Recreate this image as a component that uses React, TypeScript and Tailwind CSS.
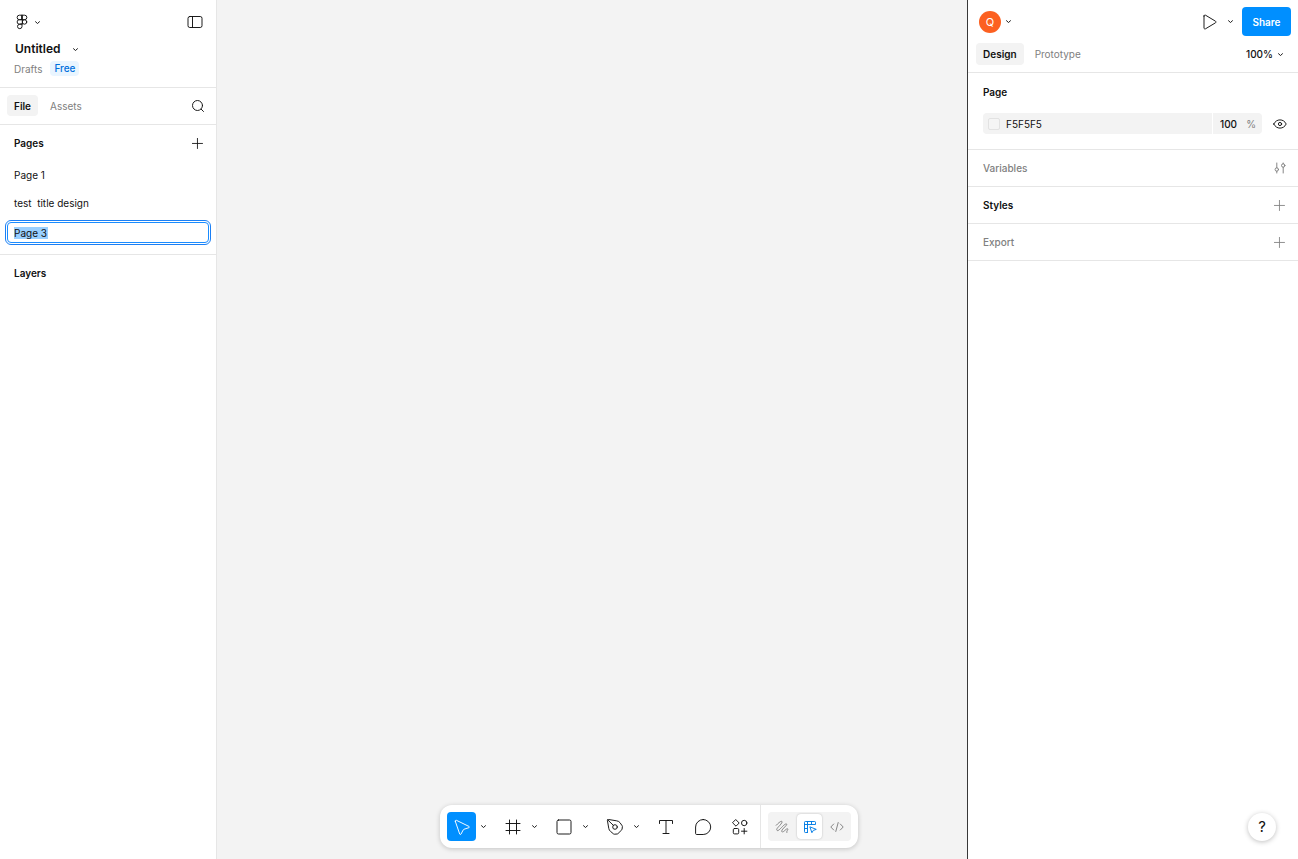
import type { ReactNode } from "react";

const Svg = ({ size = 22, box = 24, className = "", children }: { size?: number; box?: number; className?: string; children: ReactNode }) => (
  <svg
    width={size}
    height={size}
    viewBox={`0 0 ${box} ${box}`}
    fill="none"
    stroke="currentColor"
    strokeWidth={0.95}
    strokeLinecap="round"
    strokeLinejoin="round"
    className={`shrink-0 ${className}`}
    aria-hidden="true"
  >
    {children}
  </svg>
);

const Chevron = ({ label }: { label: string }) => (
  <button aria-label={label} className="flex h-7 w-[14px] items-center justify-center">
    <Svg size={7} box={7}>
      <path d="M1.5 2.7 3.5 4.5 5.5 2.7" />
    </Svg>
  </button>
);

const PlusIcon = () => (
  <Svg>
    <path d="M12.5 7v11M7 12.5h11" />
  </Svg>
);

const FigmaIcon = () => (
  <Svg size={16} box={16}>
    <path d="M8 1.2H5.4a2.25 2.25 0 0 0 0 4.5H8zM8 1.2h2.6a2.25 2.25 0 0 1 0 4.5H8zM8 5.7H5.4a2.25 2.25 0 0 0 0 4.5H8zM5.4 10.2a2.25 2.25 0 1 0 2.6 2.3v-2.3z" />
    <circle cx="10.5" cy="7.95" r="2.25" />
  </Svg>
);

const SidebarIcon = () => (
  <Svg size={16} box={16}>
    <rect x="1" y="2.5" width="14" height="11" rx="1.8" />
    <path d="M5.5 2.5v11" />
  </Svg>
);

const SearchIcon = () => (
  <Svg size={14} box={14}>
    <circle cx="6.5" cy="6.5" r="5" />
    <path d="m10.2 10.2 2.3 2.3" />
  </Svg>
);

const EyeIcon = () => (
  <Svg size={14} box={14}>
    <path d="M.8 7C2.2 4.2 4.4 2.9 7 2.9S11.8 4.2 13.2 7C11.8 9.8 9.600 11.100 7 11.100S2.200 9.800.8 7Z" />
    <circle cx="7" cy="7" r="1.6" />
  </Svg>
);

const VariablesIcon = () => (
  <Svg size={12} box={12}>
    <path d="M2.8 1v4.800M2.800 9.200v1.800M9.200 1v.8M9.200 5.200v5.800" />
    <circle cx="2.8" cy="7.5" r="1.7" />
    <circle cx="9.2" cy="3.5" r="1.7" />
  </Svg>
);

const PlayIcon = () => (
  <Svg size={16} box={16}>
    <path d="M2 2v12c0 .8.800 1.200 1.500.8l10-6c.6-.4.6-1.200 0-1.600l-10-6C2.800.8 2 1.200 2 2Z" />
  </Svg>
);

const MoveIcon = () => (
  <Svg size={18} box={18}>
    <path d="M2.3 3.300 6.700 16c.2.6 1 .6 1.300.1l2.300-4.300c.1-.2.3-.4.600-.5l4.900-1.600c.6-.2.7-1 .1-1.300L3.400 2.300c-.7-.3-1.300.3-1.100 1Z" />
  </Svg>
);

const FrameIcon = () => (
  <Svg size={16} box={16}>
    <path d="M4.5 1v14M11.5 1v14M1 4.5h14M1 11.5h14" />
  </Svg>
);

const RectIcon = () => (
  <Svg size={16} box={16}>
    <rect x="1" y="1" width="14" height="14" rx="1.5" />
  </Svg>
);

const PenIcon = () => (
  <Svg size={18} box={18}>
    <path d="M2.2 1.5C1.700 1.500 1.300 1.900 1.400 2.400L2.800 10.500c.2 1.200.8 2.200 1.700 2.900l3 2.500c.2.200.5.300.8.300l2.900-.2c.300 0 .5-.1.700-.3l3.900-3.900c.2-.2.300-.4.300-.7l.3-2.600c0-.3 0-.5-.2-.7l-2.200-3.100c-.7-1-1.700-1.600-2.900-1.800Z" />
    <path d="m1.700 1.800 5.700 5.600" />
    <circle cx="9" cy="9" r="2.300" />
  </Svg>
);

const TextIcon = () => (
  <Svg size={16} box={16}>
    <path d="M1.500 4.500v-3h13v3M8 1.500v13M5 14.500h6" />
  </Svg>
);

const CommentIcon = () => (
  <Svg size={18} box={18}>
    <path d="M9.200 1.500a7.500 7.500 0 1 1 0 15H2.600c-.6 0-1-.4-1-1V9a7.600 7.500 0 0 1 7.600-7.500Z" />
  </Svg>
);

const ActionsIcon = () => (
  <Svg size={16} box={16}>
    <path d="M4 .8 7.200 4 4 7.200.8 4Z" />
    <circle cx="12.2" cy="4" r="2.700" />
    <rect x="1.3" y="9.500" width="5.400" height="5.400" rx="1.200" />
    <path d="M12.200 9.500v5.400M9.500 12.200h5.400" />
  </Svg>
);

const DrawIcon = () => (
  <Svg size={14} box={14}>
    <path d="M1.200 5.300C3.200 3.200 5.300 1.300 6.400 1.300c1.600 0 .3 2-1.600 4.100-1.900 2-3.900 4-2.800 5 1.300 1.100 4.100-2.600 6.400-4.800 2-1.900 3.700-2.300 3.200-.9-.5 1.500-5.500 5-4.800 6.800.7 1.500 2.500-.7 4-1.900 1.400-1.200 2.500-1.100 1.900.2-.4.900-1.300 1.700-.9 2.700" />
  </Svg>
);

const DesignIcon = () => (
  <Svg size={14} box={14}>
    <path d="M4.500 12.500H2.300a.8.8 0 0 1-.8-.8V2.300c0-.5.3-.8.8-.8h9.400c.5 0 .8.300.8.8v2.200h-11M4.500 1.500v11M8.500 1.500v3M1.500 8.500h3" />
    <path d="M7 7.200 8.900 12.700l1.400-2.300 2.600-.9Z" />
  </Svg>
);

const CodeIcon = () => (
  <Svg size={14} box={14}>
    <path d="M3.700 4 .8 7l2.900 3M10.300 4l2.900 3-2.900 3M8.200 2.500 5.800 11.500" />
  </Svg>
);

const tools = [
  { label: "Frame", icon: <FrameIcon />, menu: true },
  { label: "Rectangle", icon: <RectIcon />, menu: true },
  { label: "Pen", icon: <PenIcon />, menu: true },
  { label: "Text", icon: <TextIcon />, menu: false },
  { label: "Comment", icon: <CommentIcon />, menu: false },
  { label: "Actions", icon: <ActionsIcon />, menu: false },
];

const LeftPanel = () => (
  <aside className="flex w-[217px] shrink-0 flex-col border-r border-[#e6e6e6] bg-white">
    <header className="border-b border-[#e6e6e6] pt-2 pb-[11px]">
      <div className="flex h-7 items-center justify-between pr-[13px] pl-[14px]">
        <div className="flex items-center">
          <button aria-label="Main menu">
            <FigmaIcon />
          </button>
          <Chevron label="Open main menu" />
        </div>
        <button aria-label="Toggle sidebar">
          <SidebarIcon />
        </button>
      </div>
      <div className="flex h-[25px] items-center gap-2 pt-px pl-[15px]">
        <h1 className="text-[12px] leading-4 font-semibold">Untitled</h1>
        <Chevron label="File options" />
      </div>
      <div className="flex h-[15px] items-center gap-2 pl-[14px]">
        <a href="#drafts" className="text-[#808080]">Drafts</a>
        <span className="rounded-[4px] bg-[#e9f5ff] px-[4px] leading-[15px] font-medium text-[#0070dd]">Free</span>
      </div>
    </header>

    {/* File / Assets tabs */}
    <nav className="flex h-[37px] items-center border-b border-[#e6e6e6] pr-[11px] pb-px pl-[7px]">
      <button className="h-[21px] rounded-[4px] bg-[#f3f3f3] px-[7px] font-semibold">File</button>
      <button className="ml-[5px] h-[21px] px-[7px] text-[#808080]">Assets</button>
      <button aria-label="Search" className="ml-auto">
        <SearchIcon />
      </button>
    </nav>

    <section className="border-b border-[#e6e6e6] pb-[9px]">
      <div className="flex h-9 items-center justify-between pr-2 pb-px pl-[14px]">
        <h2 className="font-semibold">Pages</h2>
        <button aria-label="Add page">
          <PlusIcon />
        </button>
      </div>
      <button className="flex h-7 w-full items-center pl-[14px]">Page 1</button>
      <button className="flex h-7 w-full items-center pl-[14px] whitespace-pre">test  title design</button>
      <div className="px-[5px] pt-[3px]">
        <label className="block rounded-[6px] border border-[#1a7ff5] p-px">
          <span className="flex h-[21px] items-center rounded-[4px] border border-[#1a8cff] px-[6px]">
            <input
              aria-label="Page name"
              defaultValue="Page 3"
              className="h-3 w-[34px] bg-[#99cfff] outline-none"
            />
          </span>
        </label>
      </div>
    </section>

    <h2 className="flex h-9 items-center pl-[14px] font-semibold">Layers</h2>
  </aside>
);

const RightPanel = () => (
  <aside className="w-[331px] shrink-0 border-l border-[#383838] bg-white">
    <header className="border-b border-[#e6e6e6] pt-[7px]">
      <div className="flex h-[29px] items-center pr-[7px] pl-[11px]">
        <button aria-label="Account" className="flex size-[22px] items-center justify-center rounded-full bg-[#fc6020] text-[11px] text-white">
          Q
        </button>
        <Chevron label="Account menu" />
        <button aria-label="Present" className="mr-[5px] ml-auto">
          <PlayIcon />
        </button>
        <Chevron label="Present options" />
        <button className="ml-[5px] h-[29px] w-[49px] rounded-[4px] bg-[#008fff] font-semibold text-white">Share</button>
      </div>
      <div className="flex h-9 items-center pr-[11px] pl-2">
        <button className="h-[22px] rounded-[4px] bg-[#f3f3f3] px-[7px] font-semibold">Design</button>
        <button className="ml-1 h-[22px] px-[7px] text-[#808080]">Prototype</button>
        <span className="ml-auto font-medium">100%</span>
        <Chevron label="Zoom options" />
      </div>
    </header>

    <section className="border-b border-[#e6e6e6] pb-[15px] pl-[15px]">
      <h2 className="flex h-[37px] items-center font-semibold">Page</h2>
      <div className="mt-[3px] flex items-center">
        <div className="flex h-[21px] flex-1 items-center rounded-l-[4px] bg-[#f3f3f3] pl-[5px]">
          <button aria-label="Page color" className="size-3 rounded-[2px] border border-[#e2e2e2] bg-[#f5f5f5]" />
          <input aria-label="Page color hex" defaultValue="F5F5F5" className="ml-[6px] w-24 outline-none" />
        </div>
        <label className="ml-px flex h-[21px] w-[49px] items-center justify-between rounded-r-[4px] bg-[#f3f3f3] pr-[6px] pl-[7px]">
          <input aria-label="Page opacity" defaultValue="100" className="w-5 font-medium outline-none" />
          <span className="text-[#808080]">%</span>
        </label>
        <button aria-label="Toggle visibility" className="mr-[11px] ml-[11px]">
          <EyeIcon />
        </button>
      </div>
    </section>

    <section className="flex h-[37px] items-center justify-between border-b border-[#e6e6e6] pr-[12px] pb-px pl-[15px] text-[#808080]">
      <h2 className="font-medium">Variables</h2>
      <button aria-label="Open variables">
        <VariablesIcon />
      </button>
    </section>
    <section className="flex h-[37px] items-center justify-between border-b border-[#e6e6e6] pr-2 pb-px pl-[15px]">
      <h2 className="font-semibold">Styles</h2>
      <button aria-label="Add style" className="text-[#808080]">
        <PlusIcon />
      </button>
    </section>
    <section className="flex h-[37px] items-center justify-between border-b border-[#e6e6e6] pr-2 pb-px pl-[15px] text-[#808080]">
      <h2 className="font-medium">Export</h2>
      <button aria-label="Add export">
        <PlusIcon />
      </button>
    </section>
  </aside>
);

const Toolbar = () => (
  <div className="flex h-[43px] items-center rounded-[12px] bg-white pl-[7px] shadow-[0_1px_5px_rgba(0,0,0,0.2)]">
    <button aria-label="Move" className="flex size-[29px] items-center justify-center rounded-[4px] bg-[#008fff] text-white">
      <MoveIcon />
    </button>
    <Chevron label="Move options" />
    {tools.map((tool) => (
      <div key={tool.label} className="ml-[8px] flex items-center">
        <button aria-label={tool.label} className="flex size-[29px] items-center justify-center">
          {tool.icon}
        </button>
        {tool.menu && <Chevron label={`${tool.label} options`} />}
      </div>
    ))}
    <div className="ml-[6px] flex h-full items-center border-l border-[#e6e6e6] px-[7px]">
      <div className="flex h-[29px] items-center rounded-[4px] bg-[#f3f3f3] text-[#808080]">
        <button aria-label="Draw" className="flex h-[29px] w-7 items-center justify-center">
          <DrawIcon />
        </button>
        <button aria-label="Design mode" className="mx-px flex h-[25px] w-[25px] items-center justify-center rounded-[4px] bg-white text-[#007be5] shadow-[0_0_2px_rgba(0,0,0,0.25)]">
          <DesignIcon />
        </button>
        <button aria-label="Dev mode" className="flex h-[29px] w-7 items-center justify-center">
          <CodeIcon />
        </button>
      </div>
    </div>
  </div>
);

export default function App() {
  return (
    <div className="relative flex min-h-screen bg-white font-['Inter',sans-serif] text-[10px] leading-4 text-[#111111]">
      <LeftPanel />
      <main className="flex-1 bg-[#f3f3f3]" />
      <RightPanel />
      <div className="absolute inset-x-0 bottom-[11px] flex justify-center">
        <Toolbar />
      </div>
      <button aria-label="Help" className="absolute right-[22px] bottom-[18px] size-7 rounded-full bg-white text-[15px] shadow-[0_1px_5px_rgba(0,0,0,0.25)]">
        ?
      </button>
    </div>
  );
}
